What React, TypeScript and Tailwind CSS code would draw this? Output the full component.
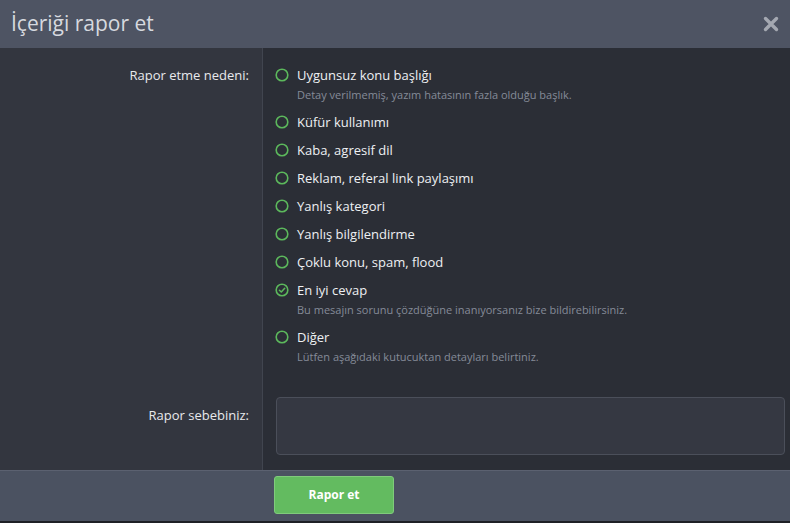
const reasons = [
  { label: "Uygunsuz konu başlığı", hint: "Detay verilmemiş, yazım hatasının fazla olduğu başlık." },
  { label: "Küfür kullanımı" },
  { label: "Kaba, agresif dil" },
  { label: "Reklam, referal link paylaşımı" },
  { label: "Yanlış kategori" },
  { label: "Yanlış bilgilendirme" },
  { label: "Çoklu konu, spam, flood" },
  { label: "En iyi cevap", hint: "Bu mesajın sorunu çözdüğüne inanıyorsanız bize bildirebilirsiniz.", checked: true },
  { label: "Diğer", hint: "Lütfen aşağıdaki kutucuktan detayları belirtiniz." },
];

function Radio({ checked }: { checked?: boolean }) {
  return (
    <svg width="14" height="14" viewBox="0 0 14 14" className="shrink-0">
      <circle cx="7" cy="7" r="5.8" fill="none" stroke="#5cb85c" strokeWidth="1.6" />
      {checked && <path d="M4.4 7.2 L6.3 9 L9.7 5.3" fill="none" stroke="#5cb85c" strokeWidth="1.5" strokeLinecap="round" strokeLinejoin="round" />}
    </svg>
  );
}

export default function App() {
  return (
    <div className="w-[790px] h-[523px] flex flex-col bg-[#1e2026] text-[13px]" style={{ fontFamily: '"Open Sans", "Noto Sans", sans-serif' }}>
      <header className="h-[48px] shrink-0 flex items-center justify-between pl-[11px] pr-[11px] bg-[#4e5463]">
        <h1 className="text-[21px] text-[#d6d9df] leading-none pb-[2px]">İçeriği rapor et</h1>
        <svg width="16" height="16" viewBox="0 0 16 16" className="mb-[1px]">
          <path d="M2.5 2.5 L13.5 13.5 M13.5 2.5 L2.5 13.5" stroke="#a4a8b1" strokeWidth="3.4" strokeLinecap="round" />
        </svg>
      </header>

      <div className="grid grid-cols-[263px_1fr]">
        <div className="bg-[#33363f] border-r border-[#41454f] pt-[17px] pr-[13px] text-right font-medium text-[#e8e9ec] leading-5">
          Rapor etme nedeni:
        </div>
        <div className="bg-[#2b2e36] pt-[17px] pb-[15px] pl-3 flex flex-col gap-2">
          {reasons.map((r) => (
            <div key={r.label}>
              <div className="flex items-center gap-[8px] leading-5 text-[#eef0f3] font-medium">
                <Radio checked={r.checked} />
                <span>{r.label}</span>
              </div>
              {r.hint && <div className="mt-px pl-[22px] leading-[18px] text-[11px] text-[#858b98]">{r.hint}</div>}
            </div>
          ))}
        </div>

        <div className="bg-[#33363f] border-r border-[#41454f] pt-6 pr-[13px] text-right font-medium text-[#e8e9ec] leading-5">
          Rapor sebebiniz:
        </div>
        <div className="bg-[#2b2e36] pt-4 pb-[15px] pl-[13px] pr-[5px]">
          <textarea className="block w-full h-[58px] resize-none rounded-[4px] border border-[#4b4f5a] bg-[#353842] outline-none" />
        </div>
      </div>

      <footer className="h-[51px] shrink-0 border-t border-[#5b6170] bg-[#4b5261] pl-[274px] pt-[5px]">
        <button className="w-[120px] h-[38px] rounded-[3px] border border-[#80cb7c] bg-[#63bb60] text-white text-[12px] font-bold">
          Rapor et
        </button>
      </footer>
    </div>
  );
}
